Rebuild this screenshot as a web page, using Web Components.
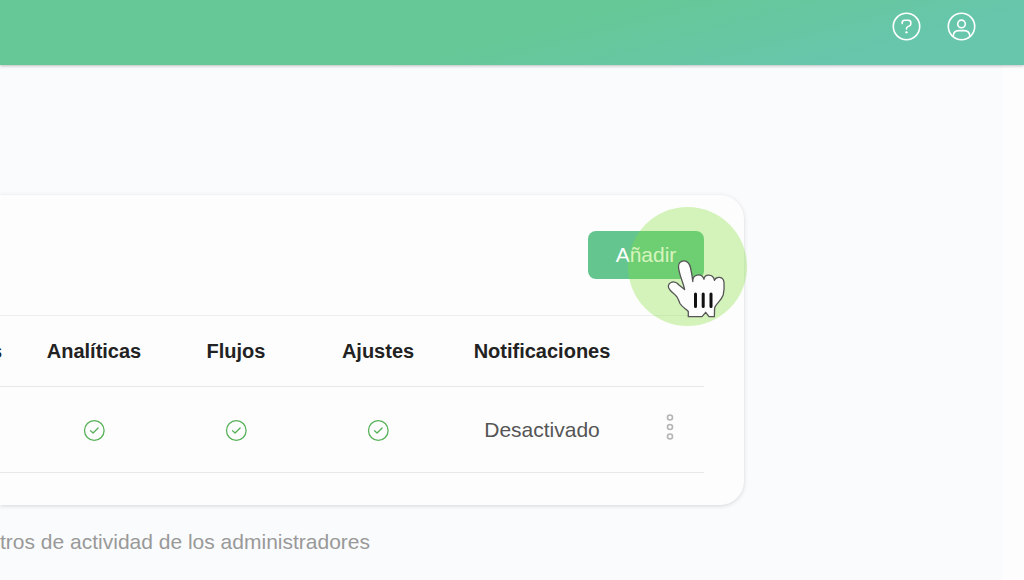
<!DOCTYPE html>
<html lang="es">
<head>
<meta charset="utf-8">
<meta name="viewport" content="width=device-width, initial-scale=1">
<title>Administradores</title>
<style>
  body {
    margin: 0;
    font-family: "Liberation Sans", Arial, sans-serif;
    font-size: 21px;
    color: #555;
    background: #fafbfc;
  }
</style>
</head>
<body>
<admin-page>
  <top-bar slot="header"></top-bar>
  <admin-card>
    <add-button slot="actions">Añadir</add-button>
    <permissions-table></permissions-table>
  </admin-card>
  <activity-link slot="footer">tros de actividad de los administradores</activity-link>
</admin-page>

<script>
const define = (name, html) => {
  const template = document.createElement('template');
  template.innerHTML = html;

  customElements.define(name, class extends HTMLElement {
    constructor() {
      super();
      this.attachShadow({ mode: 'open' });
      this.shadowRoot.appendChild(template.content.cloneNode(true));
    }
  });
};

define('admin-page', `
  <style>
    :host {
      display: flex;
      flex-direction: column;
      min-height: 100vh;
    }
    .body {
      flex: 1;
      display: grid;
      grid-template-columns: 1fr 22px;
    }
    main {
      padding: 130px 258px 0 0;
    }
    .gutter {
      background: #fdfdfd;
    }
  </style>
  <slot name="header"></slot>
  <div class="body">
    <main>
      <slot></slot>
      <slot name="footer"></slot>
    </main>
    <div class="gutter"></div>
  </div>
`);

define('top-bar', `
  <style>
    :host {
      display: block;
      position: relative;
    }
    header {
      display: flex;
      justify-content: flex-end;
      gap: 26px;
      padding: 12px 48px 24px;
      background: linear-gradient(165deg, #65c896 50%, #67c6ac 85%);
      box-shadow: 0 1px 3px rgba(0, 0, 0, 0.25);
    }
    button {
      display: block;
      padding: 0;
      border: 0;
      background: none;
      color: #fff;
      cursor: pointer;
    }
    svg {
      display: block;
      width: 29px;
      height: 29px;
      fill: none;
      stroke: currentColor;
      stroke-width: 1.6;
      stroke-linecap: round;
      stroke-linejoin: round;
    }
  </style>
  <header>
    <button type="button" aria-label="Ayuda">
      <svg viewBox="0 0 29 29">
        <circle cx="14.5" cy="14.5" r="13.2"/>
        <path d="M10.2 11.600v-.8a2.500 2.500 0 0 1 2.500-2.500h3.600a2.500 2.500 0 0 1 2.500 2.500v1a2.300 2.300 0 0 1-1.300 2.100l-2 1a1.800 1.800 0 0 0-1 1.600v.4"/>
        <circle cx="14.400" cy="20.300" r=".8" fill="currentColor" stroke-width=".8"/>
      </svg>
    </button>
    <button type="button" aria-label="Cuenta">
      <svg viewBox="0 0 29 29">
        <circle cx="14.5" cy="14.5" r="13.2"/>
        <circle cx="14.5" cy="11.9" r="3.8"/>
        <path d="M6.200 24.300c0-3.600 2.200-5.700 5.600-5.700h5.400c3.400 0 5.600 2.100 5.600 5.700"/>
      </svg>
    </button>
  </header>
`);

define('admin-card', `
  <style>
    :host {
      display: block;
      padding: 0 40px 32px 0;
      border-radius: 0 24px 24px 0;
      background: #fdfdfd;
      box-shadow: 0 1px 4px rgba(60, 80, 100, 0.2);
    }
    .actions {
      display: flex;
      justify-content: flex-end;
      padding: 36px 0;
      border-bottom: 1px solid #eee;
    }
  </style>
  <div class="actions"><slot name="actions"></slot></div>
  <slot></slot>
`);

define('add-button', `
  <style>
    :host {
      display: block;
      position: relative;
    }
    button {
      display: block;
      min-width: 116px;
      height: 48px;
      padding: 0 24px;
      border: 0;
      border-radius: 8px;
      background: #65c58f;
      color: #fff;
      font: inherit;
      cursor: pointer;
    }
    /* click highlight and pointer, drawn over the card */
    .halo {
      position: absolute;
      top: -24px;
      right: -43px;
      width: 119px;
      height: 119px;
      border-radius: 50%;
      background: rgba(132, 226, 56, 0.33);
      pointer-events: none;
    }
    .hand {
      position: absolute;
      top: 28px;
      right: -22px;
      width: 60px;
      height: 62px;
      pointer-events: none;
    }
  </style>
  <button type="button"><slot></slot></button>
  <div class="halo"></div>
  <svg class="hand" viewBox="0 0 60 62" aria-hidden="true">
    <path d="M22.300 57.700 V52.500 C20 50 16 48 14 44.500 C12.500 41 12 38.500 10 36.700 C8 34.500 6 33.500 4 31 C1.500 28.500 1.800 25 5 23.500 C7.500 22.300 11 23.500 13 26 L18.600 30.500 C17.500 24 12.800 15 12.500 8 C12.200 4.500 14.500 2 17.800 1.900 C21.500 1.800 23.500 4.500 24.600 9 C25.600 13.500 26.300 18 26.800 22.500 C26.300 14.500 36 14 38 20.300 C38.500 14.500 47 14.500 48.500 21.300 C50 17 57.500 17 58 23.500 C58.400 28 58 32.500 57.200 36 C55.500 41 51.500 43.500 49 47.800 C48 51 48.800 54 48.300 57.600 L43 57.700 L39.700 53.300 L36 57.700 Z" fill="#fdfdfd" stroke="#555" stroke-width="1.300" stroke-linejoin="round"/>
    <path d="M29.500 35v12.500M37.200 35v12.500M45 35v12.500" fill="none" stroke="#111" stroke-width="3" stroke-linecap="round"/>
  </svg>
`);

define('check-icon', `
  <style>
    :host {
      display: inline-block;
      vertical-align: middle;
    }
    svg {
      display: block;
      width: 22px;
      height: 22px;
      fill: none;
      stroke: #57b158;
      stroke-width: 1.3;
      stroke-linecap: round;
      stroke-linejoin: round;
    }
  </style>
  <svg viewBox="0 0 22 22" role="img" aria-label="Activado">
    <circle cx="11.300" cy="10.500" r="9.800"/>
    <path d="M7.500 10.800l2.600 2.200 5-5"/>
  </svg>
`);

define('permissions-table', `
  <style>
    :host {
      display: block;
    }
    table {
      width: 100%;
      table-layout: fixed;
      border-collapse: separate;
      border-spacing: 0;
    }
    th, td {
      padding: 0;
      border-bottom: 1px solid #e8e8e8;
      text-align: center;
      vertical-align: middle;
    }
    th {
      height: 70px;
      font-size: 20px;
      color: #222;
    }
    td {
      height: 85px;
    }
    col.permission {
      width: 142px;
    }
    col.state {
      width: 186px;
    }
    col.menu {
      width: 69px;
    }
    /* column that runs off the left side */
    .cut {
      display: flex;
      justify-content: flex-end;
      padding-right: 21px;
    }
    button {
      display: inline-block;
      padding: 0 0 6px;
      border: 0;
      background: none;
      vertical-align: middle;
      cursor: pointer;
    }
    svg {
      display: block;
      width: 10px;
      height: 30px;
      fill: none;
      stroke: #b4b4b4;
      stroke-width: 1.6;
    }
  </style>
  <table>
    <colgroup>
      <col>
      <col class="permission"><col class="permission"><col class="permission">
      <col class="state">
      <col class="menu">
    </colgroup>
    <thead>
      <tr>
        <th scope="col"><div class="cut">s</div></th>
        <th scope="col">Analíticas</th>
        <th scope="col">Flujos</th>
        <th scope="col">Ajustes</th>
        <th scope="col">Notificaciones</th>
        <th></th>
      </tr>
    </thead>
    <tbody>
      <tr>
        <td></td>
        <td><check-icon></check-icon></td>
        <td><check-icon></check-icon></td>
        <td><check-icon></check-icon></td>
        <td>Desactivado</td>
        <td>
          <button type="button" aria-label="Opciones">
            <svg viewBox="0 0 10 30">
              <circle cx="5" cy="5.500" r="2.500"/>
              <circle cx="5" cy="15" r="2.500"/>
              <circle cx="5" cy="24.500" r="2.500"/>
            </svg>
          </button>
        </td>
      </tr>
    </tbody>
  </table>
`);

define('activity-link', `
  <style>
    :host {
      display: block;
      padding: 24px 0;
      line-height: 26px;
    }
    a {
      color: #999;
      text-decoration: none;
    }
  </style>
  <a href="#"><slot></slot></a>
`);
</script>
</body>
</html>
